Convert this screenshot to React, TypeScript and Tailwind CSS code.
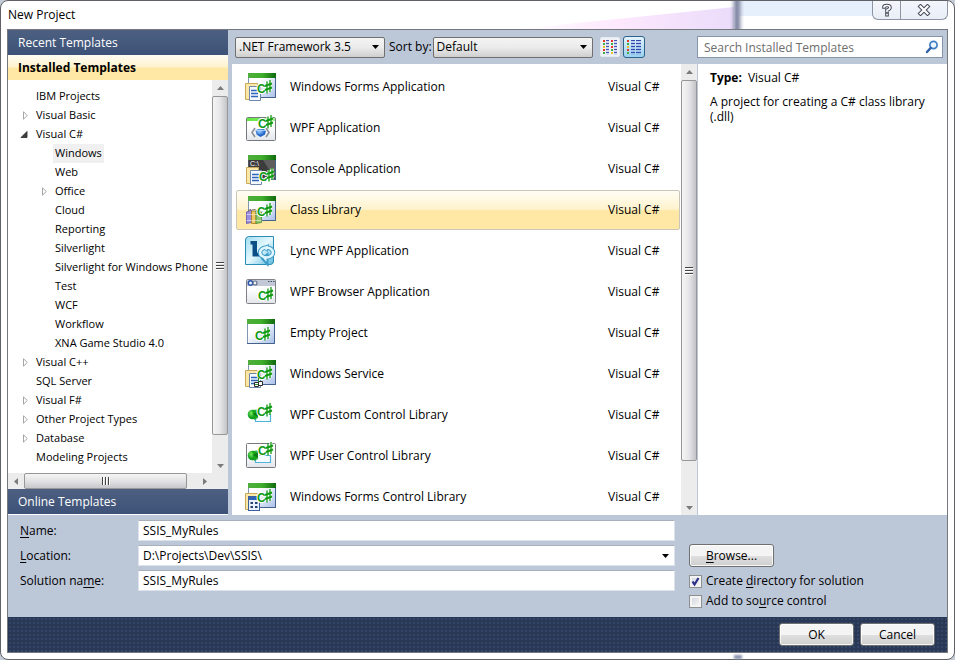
import { useState, type ReactNode } from "react";
import clsx from "clsx";

type IconKind =
  | "forms"
  | "wpf"
  | "console"
  | "library"
  | "lync"
  | "browser"
  | "empty"
  | "service"
  | "customControl"
  | "userControl"
  | "formsControl";

interface Template {
  name: string;
  language: string;
  icon: IconKind;
}

interface TreeNode {
  label: string;
  level: 0 | 1;
  state?: "open" | "closed";
}

const TEMPLATES: Template[] = [
  { name: "Windows Forms Application", language: "Visual C#", icon: "forms" },
  { name: "WPF Application", language: "Visual C#", icon: "wpf" },
  { name: "Console Application", language: "Visual C#", icon: "console" },
  { name: "Class Library", language: "Visual C#", icon: "library" },
  { name: "Lync WPF Application", language: "Visual C#", icon: "lync" },
  { name: "WPF Browser Application", language: "Visual C#", icon: "browser" },
  { name: "Empty Project", language: "Visual C#", icon: "empty" },
  { name: "Windows Service", language: "Visual C#", icon: "service" },
  { name: "WPF Custom Control Library", language: "Visual C#", icon: "customControl" },
  { name: "WPF User Control Library", language: "Visual C#", icon: "userControl" },
  { name: "Windows Forms Control Library", language: "Visual C#", icon: "formsControl" },
];

const TREE: TreeNode[] = [
  { label: "IBM Projects", level: 0 },
  { label: "Visual Basic", level: 0, state: "closed" },
  { label: "Visual C#", level: 0, state: "open" },
  { label: "Windows", level: 1 },
  { label: "Web", level: 1 },
  { label: "Office", level: 1, state: "closed" },
  { label: "Cloud", level: 1 },
  { label: "Reporting", level: 1 },
  { label: "Silverlight", level: 1 },
  { label: "Silverlight for Windows Phone", level: 1 },
  { label: "Test", level: 1 },
  { label: "WCF", level: 1 },
  { label: "Workflow", level: 1 },
  { label: "XNA Game Studio 4.0", level: 1 },
  { label: "Visual C++", level: 0, state: "closed" },
  { label: "SQL Server", level: 0 },
  { label: "Visual F#", level: 0, state: "closed" },
  { label: "Other Project Types", level: 0, state: "closed" },
  { label: "Database", level: 0, state: "closed" },
  { label: "Modeling Projects", level: 0 },
];

/* ---------- template icons, all on a 32x32 grid ---------- */

function CSharp({ x, y }: { x: number; y: number }) {
  return (
    <g>
      <text
        x={x}
        y={y}
        fill="#129a12"
        stroke="#fff"
        strokeWidth={2}
        strokeLinejoin="round"
        paintOrder="stroke"
        fontFamily="Liberation Sans, sans-serif"
        fontSize={12}
        fontWeight={700}
      >
        C
      </text>
      <g transform={`translate(${x + 8} ${y - 13})`} fill="none">
        <path d="M2 2V13M5 0.5V11.5M0 6L7 3.5M0 10L7 7.5" stroke="#fff" strokeWidth={3} />
        <path d="M2 1.5V13.5M5 0V12" stroke="#129a12" strokeWidth={1.3} />
        <path d="M0 6L7 3.5M0 10L7 7.5" stroke="#129a12" strokeWidth={2} />
      </g>
    </g>
  );
}

function GreenWindow({ x = 3, dark = false }: { x?: number; dark?: boolean }) {
  return (
    <g>
      <rect x={x + 0.5} y={2.5} width={27} height={24} fill={dark ? "#3c3c3c" : "url(#pane)"} stroke={dark ? "#555" : "#7f96b4"} />
      <path d={`M${x} 26.5H${x + 27.5}V3`} fill="none" stroke="#45628c" strokeWidth={1} />
      <rect x={x} y={2} width={28} height={5} fill="url(#greenBar)" />
    </g>
  );
}

function Sheets() {
  return (
    <g>
      <path d="M0.5 12.5H12.5V28.5H0.5Z" fill="#fbe8a6" stroke="#c9a95a" />
      <path d="M4.5 15.5H15.5V29.5H4.5Z" fill="#f4f8ff" stroke="#6f87ab" />
      <path d="M6 19.5H13M6 22.5H13M6 25.5H13" stroke="#2f63b8" strokeWidth={1.3} />
    </g>
  );
}

function GreenShapes() {
  return (
    <g>
      <path d="M14.5 15.5H25.5V22.5H10.5V19" fill="#f4fcff" stroke="#4fb4dc" strokeWidth={1.2} />
      <circle cx={7.5} cy={15.5} r={4.8} fill="url(#ball)" />
      <path d="M7 11L13 10.5L13 19L9 21Z" fill="#16a616" opacity={0.85} />
      <path d="M8 15L13 12V18Z" fill="#0d7c14" />
    </g>
  );
}

function IconDefs() {
  return (
    <svg width="0" height="0" className="absolute" aria-hidden="true">
      <defs>
        <linearGradient id="greenBar">
          <stop offset="0" stopColor="#4fae3c" />
          <stop offset="0.5" stopColor="#3fae2c" />
          <stop offset="1" stopColor="#0f6a0c" />
        </linearGradient>
        <linearGradient id="limeBar">
          <stop offset="0" stopColor="#5ee63c" />
          <stop offset="1" stopColor="#a4f58c" />
        </linearGradient>
        <linearGradient id="pane" x2="1" y2="1">
          <stop offset="0.35" stopColor="#ffffff" />
          <stop offset="1" stopColor="#a9c0ea" />
        </linearGradient>
        <linearGradient id="greyPane" x2="0" y2="1">
          <stop offset="0.4" stopColor="#ffffff" />
          <stop offset="1" stopColor="#e2e5ea" />
        </linearGradient>
        <linearGradient id="lync" x2="1" y2="1">
          <stop offset="0" stopColor="#9fdcf0" />
          <stop offset="0.5" stopColor="#e4f8fe" />
          <stop offset="1" stopColor="#5bb9dc" />
        </linearGradient>
        <radialGradient id="ball" cx="0.4" cy="0.35">
          <stop offset="0" stopColor="#7bea5c" />
          <stop offset="1" stopColor="#0c9a20" />
        </radialGradient>
        <radialGradient id="gem" cx="0.4" cy="0.3">
          <stop offset="0" stopColor="#9cd0ff" />
          <stop offset="1" stopColor="#1f62c8" />
        </radialGradient>
      </defs>
    </svg>
  );
}

const ICON_ART: Record<IconKind, ReactNode> = {
  forms: (
    <>
      <GreenWindow />
      <Sheets />
      <CSharp x={12} y={22} />
    </>
  ),
  wpf: (
    <>
      <rect x={1.5} y={5.5} width={29} height={23} rx={1} fill="url(#greyPane)" stroke="#76797d" />
      <rect x={2} y={6} width={28} height={3} fill="url(#limeBar)" />
      <path d="M10 16L7 20.5L10 25M21 16L24 20.5L21 25" fill="none" stroke="#8c9096" strokeWidth={1.6} />
      <path d="M10.5 18.5L13 17H18.5L21 18.5L20 22.5L15.5 25L11.5 22.5Z" fill="url(#gem)" />
      <path d="M10.5 18.5H21" stroke="#b9dcff" strokeWidth={0.8} />
      <CSharp x={13} y={16} />
    </>
  ),
  console: (
    <>
      <GreenWindow dark />
      <path d="M18 7H30V26Z" fill="#808080" opacity={0.5} />
      <text x={5} y={13} fill="#fff" fontSize={7} fontFamily="Liberation Sans, sans-serif">
        C:\
      </text>
      <g transform="translate(1 2)">
        <Sheets />
      </g>
      <CSharp x={14} y={28} />
    </>
  ),
  library: (
    <>
      <GreenWindow />
      <path d="M1.5 18L6.5 16V28.5L1.5 29.5Z" fill="#9d8fe0" stroke="#5e51ac" strokeWidth={0.8} />
      <path d="M6.5 17H11V29.5H6.5Z" fill="#f2c765" stroke="#a87b20" strokeWidth={0.8} />
      <path d="M11 16.5L16.5 18V28.5L11 29.5Z" fill="#8fc86c" stroke="#4a8a30" strokeWidth={0.8} />
      <path d="M1.5 20.5H16.5M1.5 26.5H16.5" stroke="#fff" strokeWidth={0.7} opacity={0.7} />
      <path d="M3 16.5L6 15.5M7 16L10.5 15.5M12 16L15 17" stroke="#7a6a50" strokeWidth={1} />
      <CSharp x={12} y={22} />
    </>
  ),
  lync: (
    <>
      <path d="M3.5 1.5H28.5V27Q28 29.5 25 29.5H0.5V5Q0.5 2 3.5 1.5Z" fill="url(#lync)" stroke="#2b8db4" />
      <path d="M5.5 6H12V17.5H16V21.5H7.5V9.500H5.500Z" fill="#0c4f86" />
      <ellipse cx={21.5} cy={17.5} rx={6.500} ry={5} fill="none" stroke="#3c9cc8" strokeWidth={4.600} />
      <path d="M17 23.500L22.500 19V29.500Z" fill="#e0f6ff" stroke="#3c9cc8" strokeWidth={2} />
      <path d="M23.500 9.500L17.500 13L22.500 16.500Z" fill="#e0f6ff" stroke="#3c9cc8" strokeWidth={1} />
      <ellipse cx={21.5} cy={17.5} rx={6.500} ry={5} fill="none" stroke="#e0f6ff" strokeWidth={2.600} />
    </>
  ),
  browser: (
    <>
      <rect x={1.5} y={3.5} width={29} height={24} rx={1} fill="url(#greyPane)" stroke="#808287" />
      <rect x={2} y={4} width={28} height={6} fill="#c3c8d6" />
      <circle cx={5.5} cy={7} r={2.2} fill="#e6eeff" stroke="#2b55a8" strokeWidth={1.4} />
      <circle cx={10} cy={7} r={2} fill="#eef0f4" stroke="#63708c" strokeWidth={1.2} />
      <path d="M23 5.5H24.5M25.5 5.5H27M28 5.5H29.5" stroke="#4c5264" strokeWidth={1} />
      <CSharp x={13} y={24} />
    </>
  ),
  empty: (
    <>
      <GreenWindow x={2} />
      <CSharp x={10} y={23} />
    </>
  ),
  service: (
    <>
      <GreenWindow />
      <Sheets />
      <CSharp x={12} y={21} />
      <path d="M9.5 24.5H13.5V28.5H9.5ZM13.5 23.5H17.5V27.5H13.5Z" fill="#fff" stroke="#2d2d2d" strokeWidth={1} />
      <path d="M10 26.5H13M13.5 20V24" stroke="#28962a" strokeWidth={1} />
    </>
  ),
  customControl: (
    <>
      <GreenShapes />
      <CSharp x={12} y={17} />
    </>
  ),
  userControl: (
    <>
      <rect x={1.5} y={3.5} width={29} height={24} rx={1} fill="url(#greyPane)" stroke="#76797d" />
      <GreenShapes />
      <CSharp x={13} y={15} />
    </>
  ),
  formsControl: (
    <>
      <GreenWindow />
      <path d="M0.5 12.5H12.5V28.5H0.5Z" fill="#fbe8a6" stroke="#c9a95a" />
      <rect x={3.5} y={15.5} width={11} height={14} fill="#e9f1ff" stroke="#3b5f9c" />
      <rect x={4} y={16} width={10} height={3} fill="#2f63b8" />
      <path d="M5.5 22H8M10 22H12.5M5.5 26H8M10 26H12.5" stroke="#24406e" strokeWidth={2} />
      <CSharp x={12} y={21} />
    </>
  ),
};

function TemplateIcon({ kind }: { kind: IconKind }) {
  return (
    <svg width="32" height="32" viewBox="0 0 32 32" className="shrink-0" aria-hidden="true">
      {ICON_ART[kind]}
    </svg>
  );
}

/* ---------- small shared parts ---------- */

function Arrow({ dir }: { dir: "up" | "down" | "left" | "right" }) {
  const d = {
    up: "M0 5L3.5 1L7 5Z",
    down: "M0 2H7L3.5 6Z",
    left: "M5 0V7L1 3.5Z",
    right: "M2 0V7L6 3.5Z",
  }[dir];
  return (
    <svg width="7" height="7" viewBox="0 0 7 7" className="shrink-0" aria-hidden="true">
      <path d={d} fill="#7b7b7b" />
    </svg>
  );
}

function VScroll({ thumb }: { thumb: string }) {
  return (
    <div className="flex w-4 shrink-0 flex-col items-center bg-[#ececec]">
      <div className="flex h-4 items-center">
        <Arrow dir="up" />
      </div>
      <div className="flex w-full grow flex-col">
        <div
          className={clsx(
            "flex flex-col items-center justify-center gap-px rounded-xs border border-[#979797] bg-linear-to-r from-[#f5f5f5] via-[#e6e6e8] to-[#c4c4c8]",
            thumb,
          )}
        >
          <span className="h-0.5 w-2 border-b border-white bg-[#444]" />
          <span className="h-0.5 w-2 border-b border-white bg-[#444]" />
          <span className="h-0.5 w-2 border-b border-white bg-[#444]" />
        </div>
      </div>
      <div className="flex h-4 items-center">
        <Arrow dir="down" />
      </div>
    </div>
  );
}

function HScroll() {
  return (
    <div className="flex h-4 shrink-0 items-center bg-[#ececec] pr-4">
      <div className="flex w-4 justify-center">
        <Arrow dir="left" />
      </div>
      <div className="flex h-full grow">
        <div className="flex h-full w-[95%] items-center justify-center gap-px rounded-xs border border-[#979797] bg-linear-to-b from-[#f5f5f5] via-[#e2e2e4] to-[#c8c8cc]">
          <span className="h-2 w-0.5 border-r border-white bg-[#444]" />
          <span className="h-2 w-0.5 border-r border-white bg-[#444]" />
          <span className="h-2 w-0.5 border-r border-white bg-[#444]" />
        </div>
      </div>
      <div className="flex w-4 justify-center">
        <Arrow dir="right" />
      </div>
    </div>
  );
}

function Caret() {
  return (
    <svg
      width="7"
      height="4"
      viewBox="0 0 7 4"
      className="pointer-events-none absolute top-1/2 right-1.5 -translate-y-1/2"
      aria-hidden="true"
    >
      <path d="M0 0H7L3.5 4Z" fill="#000" />
    </svg>
  );
}

function ToolbarSelect({ id, label, value, width }: { id: string; label?: string; value: string; width: string }) {
  return (
    <div className={clsx("relative", width)}>
      <select
        id={id}
        aria-label={label}
        className="block h-[21px] w-full appearance-none rounded-xs border border-[#707070] bg-linear-to-b from-[#f4f4f4] via-[#ebebeb] to-[#cfcfcf] pl-[3px]"
      >
        <option>{value}</option>
      </select>
      <Caret />
    </div>
  );
}

function PushButton({ children, className }: { children: ReactNode; className?: string }) {
  return (
    <button
      type="button"
      className={clsx(
        "rounded-[3px] border border-[#707070] bg-linear-to-b from-[#f4f4f4] from-50% via-[#dedede] via-55% to-[#cfcfcf] inset-ring inset-ring-white/80",
        className,
      )}
    >
      {children}
    </button>
  );
}

function CheckRow({ id, defaultChecked, children }: { id: string; defaultChecked?: boolean; children: ReactNode }) {
  return (
    <div className="flex h-5 items-center">
      <span className="relative flex">
        <input
          id={id}
          type="checkbox"
          defaultChecked={defaultChecked}
          className="peer size-[13px] appearance-none border border-[#8e8f8f] bg-linear-to-br from-[#cfd3da] to-[#f8f8f8] inset-ring-2 inset-ring-[#f4f4f4]"
        />
        <svg
          viewBox="0 0 13 13"
          className="pointer-events-none absolute inset-0 hidden size-[13px] peer-checked:block"
          aria-hidden="true"
        >
          <path d="M3.5 6.5L5.5 9.5L9.5 3" fill="none" stroke="#2b2f86" strokeWidth="2.2" />
        </svg>
      </span>
      <label htmlFor={id} className="ml-1">
        {children}
      </label>
    </div>
  );
}

/* ---------- dialog sections ---------- */

function TitleBar() {
  return (
    <header className="relative flex h-7 shrink-0 items-center pl-px">
      {/* blurred desktop showing through the glass */}
      <svg width="600" height="28" viewBox="0 0 600 28" className="absolute top-0 right-0" aria-hidden="true">
        <defs>
          <linearGradient id="glow">
            <stop offset="0" stopColor="#fff" />
            <stop offset="0.45" stopColor="#fde8fd" />
            <stop offset="1" stopColor="#ebdcfb" />
          </linearGradient>
          <filter id="soft" x="-1" width="3">
            <feGaussianBlur stdDeviation="2 1" />
          </filter>
        </defs>
        <path d="M170 28Q270 18 386 6V28Z" fill="url(#glow)" />
        <rect x="391" y="0" width="209" height="15" fill="#e6effc" />
        <rect x="386" y="-4" width="6" height="36" fill="#6f7796" filter="url(#soft)" />
      </svg>
      <h1 className="relative">New Project</h1>
      <div className="absolute top-0 right-0 flex h-[19px] w-[76px] rounded-b-md border border-t-0 border-[#8d95a3] bg-linear-to-b from-[#f3f6fb] to-[#e9eef6]">
        <button type="button" aria-label="Help" className="flex w-7 items-center justify-center border-r border-[#8d95a3]">
          <svg width="12" height="14" viewBox="0 0 12 14" aria-hidden="true">
            <g fill="none" strokeLinecap="square">
              <path d="M3 4Q3 2.5 6 2.5Q9 2.5 9 4.5Q9 6 6 7.2V8.5M6 11.5V11.6" stroke="#454a58" strokeWidth="3.6" />
              <path d="M3 4Q3 2.5 6 2.5Q9 2.5 9 4.5Q9 6 6 7.2V8.5M6 11.5V11.6" stroke="#fff" strokeWidth="1.6" />
            </g>
          </svg>
        </button>
        <button type="button" aria-label="Close" className="flex grow items-center justify-center">
          <svg width="14" height="12" viewBox="0 0 14 12" aria-hidden="true">
            <path d="M3.5 2.5L10.5 9.5M10.5 2.5L3.5 9.5" stroke="#454a58" strokeWidth="4.2" strokeLinecap="square" />
            <path d="M3.5 2.5L10.5 9.5M10.5 2.5L3.5 9.5" stroke="#fff" strokeWidth="2.2" strokeLinecap="square" />
          </svg>
        </button>
      </div>
    </header>
  );
}

function TreeRow({ node, selected, onSelect }: { node: TreeNode; selected: boolean; onSelect: () => void }) {
  return (
    <li className={clsx("flex h-[19px] items-center", node.level === 0 ? "pl-3" : "pl-[31px]")}>
      <span className="flex w-[14px] shrink-0 justify-start">
        {node.state === "closed" && (
          <svg width="9" height="9" viewBox="0 0 9 9" aria-hidden="true">
            <path d="M3.5 0.8V8.2L7.3 4.5Z" fill="#fff" stroke="#a6a6a6" />
          </svg>
        )}
        {node.state === "open" && (
          <svg width="9" height="9" viewBox="0 0 9 9" aria-hidden="true">
            <path d="M7 1.5V7.5H1Z" fill="#404040" stroke="#262626" strokeWidth="0.8" />
          </svg>
        )}
      </span>
      <button
        type="button"
        onClick={onSelect}
        className={clsx("h-full pl-0.5 whitespace-nowrap", selected && "bg-[#f0f0f0] pr-0.5")}
      >
        {node.label}
      </button>
    </li>
  );
}

function TemplateTree() {
  const [selected, setSelected] = useState("Windows");
  return (
    <nav className="flex w-[220px] shrink-0 flex-col border-b border-white bg-white" aria-label="Templates">
      <button type="button" className="h-[25px] shrink-0 bg-linear-to-b from-[#4d6082] to-[#3d5277] pl-2.5 text-left text-white">
        Recent Templates
      </button>
      <button
        type="button"
        className="h-[25px] shrink-0 bg-linear-to-b from-[#fffcf4] from-0% via-[#fff3cd] via-48% to-[#ffe8a6] to-52% pl-2.5 text-left font-bold"
      >
        Installed Templates
      </button>
      <div className="flex min-h-0 grow">
        <ul className="min-w-0 grow overflow-hidden pt-[7px] text-[11px]">
          {TREE.map((node) => (
            <TreeRow
              key={node.label}
              node={node}
              selected={selected === node.label}
              onSelect={() => setSelected(node.label)}
            />
          ))}
        </ul>
        <VScroll thumb="h-[94%]" />
      </div>
      <HScroll />
      <button type="button" className="h-[25px] shrink-0 bg-linear-to-b from-[#4d6082] to-[#3d5277] pl-2.5 text-left text-white">
        Online Templates
      </button>
    </nav>
  );
}

function ViewIcon({ columns }: { columns: 1 | 2 }) {
  const rows = [1, 4, 7, 10, 13];
  const colours = ["#e0362c", "#3fae49", "#e8c22a", "#e0362c", "#3fae49"];
  return (
    <svg width="16" height="16" viewBox="0 0 16 16" aria-hidden="true">
      {rows.map((y, i) => (
        <g key={y}>
          <rect x={1} y={y} width={2} height={2} fill={colours[i]} />
          {columns === 2 ? (
            <>
              <path d={`M4 ${y + 0.5}H7M12 ${y + 0.5}H15`} stroke="#4257b8" strokeWidth={1} />
              <path d={`M4 ${y + 2}H7M12 ${y + 2}H15`} stroke="#8b98d8" strokeWidth={0.6} />
              <rect x={9} y={y} width={2} height={2} fill={colours[(i + 3) % 5]} />
            </>
          ) : (
            <>
              <path d={`M5 ${y + 0.5}H9M10 ${y + 0.5}H15`} stroke="#3048b0" strokeWidth={1} />
              <path d={`M5 ${y + 2}H9M10 ${y + 2}H15`} stroke="#7f8fd0" strokeWidth={0.6} />
            </>
          )}
        </g>
      ))}
    </svg>
  );
}

function Toolbar() {
  return (
    <div className="flex h-[34px] shrink-0 items-center pr-1">
      <div className="flex grow items-center pl-[3px]">
        <ToolbarSelect id="framework" label="Framework" value=".NET Framework 3.5" width="w-[150px]" />
        <label htmlFor="sort" className="mr-px ml-1 whitespace-nowrap">
          Sort by:
        </label>
        <ToolbarSelect id="sort" value="Default" width="w-40" />
        <button
          type="button"
          aria-label="Small icons"
          className="ml-[7px] flex size-5 items-center justify-center rounded-xs border border-[#e4eaf2] bg-[#eef1f6]"
        >
          <ViewIcon columns={2} />
        </button>
        <button
          type="button"
          aria-label="Medium icons"
          className="ml-[3px] flex size-[22px] items-center justify-center rounded-[3px] border border-[#2c628b] bg-linear-to-b from-[#e5f4fc] to-[#98d1ef]"
        >
          <ViewIcon columns={1} />
        </button>
      </div>
      <div className="relative w-[246px]">
        <input
          type="search"
          aria-label="Search Installed Templates"
          placeholder="Search Installed Templates"
          className="block h-[22px] w-full border border-[#8595ac] bg-white pr-6 pl-1.5 placeholder:text-[#6d6d6d]"
        />
        <svg width="14" height="14" viewBox="0 0 14 14" className="absolute top-1 right-1" aria-hidden="true">
          <circle cx="8.5" cy="5" r="3.6" fill="#eef6ff" stroke="#3f7fc4" strokeWidth="1.7" />
          <path d="M5.8 7.8L2 12" stroke="#2c5fa8" strokeWidth="2.4" strokeLinecap="round" />
        </svg>
      </div>
    </div>
  );
}

function TemplateList() {
  const [selected, setSelected] = useState("Class Library");
  return (
    <div className="flex min-w-0 grow bg-white">
      <ul className="flex min-w-0 grow flex-col gap-px overflow-hidden pt-[3px] pr-px pl-1">
        {TEMPLATES.map((t) => (
          <li key={t.name} className="shrink-0">
            <button
              type="button"
              onClick={() => setSelected(t.name)}
              className={clsx(
                "flex h-10 w-full items-center rounded-xs border pl-2 text-left",
                selected === t.name
                  ? "border-[#c9c7ba] bg-linear-to-b from-[#fffcf4] from-0% via-[#fff3cd] via-48% to-[#ffe8a6] to-52%"
                  : "border-transparent",
              )}
            >
              <TemplateIcon kind={t.icon} />
              <span className="ml-[13px] grow truncate">{t.name}</span>
              <span className="w-[71px] shrink-0">{t.language}</span>
            </button>
          </li>
        ))}
      </ul>
      <VScroll thumb="h-[91%]" />
    </div>
  );
}

function Details() {
  return (
    <aside className="w-[250px] shrink-0 border-l border-[#bcc7d8] bg-white px-3 pt-1.5">
      <p className="leading-4">
        <strong className="mr-1.5">Type:</strong>Visual C#
      </p>
      <p className="mt-2 leading-[15px]">A project for creating a C# class library (.dll)</p>
    </aside>
  );
}

function ProjectForm() {
  const field = "h-[21px] w-full border border-t-[#a9b0bb] border-[#dde3ec] bg-white pl-1";
  return (
    <div className="flex shrink-0 pt-[5px] pb-1.5 pl-3">
      <div className="flex grow flex-col gap-1">
        <div className="flex items-center">
          <label htmlFor="name" className="w-[118px] shrink-0">
            <u className="underline-offset-2">N</u>ame:
          </label>
          <input id="name" defaultValue="SSIS_MyRules" className={field} />
        </div>
        <div className="flex items-center">
          <label htmlFor="location" className="w-[118px] shrink-0">
            <u className="underline-offset-2">L</u>ocation:
          </label>
          <div className="relative w-full">
            <select id="location" className={clsx(field, "block appearance-none")}>
              <option>D:\Projects\Dev\SSIS\</option>
            </select>
            <Caret />
          </div>
        </div>
        <div className="flex items-center">
          <label htmlFor="solution" className="w-[118px] shrink-0">
            Solution na<u className="underline-offset-2">m</u>e:
          </label>
          <input id="solution" defaultValue="SSIS_MyRules" className={field} />
        </div>
      </div>
      <div className="ml-3.5 w-[258px] shrink-0 pt-6">
        <PushButton className="mb-1 block h-[23px] w-[85px]">
          <u className="underline-offset-2">B</u>rowse...
        </PushButton>
        <CheckRow id="mkdir" defaultChecked>
          Create <u className="underline-offset-2">d</u>irectory for solution
        </CheckRow>
        <CheckRow id="scc">
          Add to so<u className="underline-offset-2">u</u>rce control
        </CheckRow>
      </div>
    </div>
  );
}

export default function App() {
  return (
    <div className="h-screen bg-[#c4ccd8] font-['Open_Sans','Noto_Sans',sans-serif] text-xs text-black">
      <IconDefs />
      <main className="relative flex h-full flex-col rounded-lg border border-[#5f6166] bg-white px-1.5 pb-1.5">
        <TitleBar />
        <div className="flex min-h-0 grow flex-col border border-[#75787d] bg-[#bcc7d8]">
          <div className="flex min-h-0 grow">
            <TemplateTree />
            <div className="ml-1 flex min-w-0 grow flex-col">
              <Toolbar />
              <div className="flex min-h-0 grow">
                <TemplateList />
                <Details />
              </div>
            </div>
          </div>
          <ProjectForm />
          <footer className="flex shrink-0 justify-end gap-1.5 bg-[#293955] bg-[radial-gradient(#33466a_1px,transparent_1px)] bg-size-[4px_4px] px-3 py-1.5">
            <PushButton className="h-[23px] w-[75px]">OK</PushButton>
            <PushButton className="h-[23px] w-[75px]">Cancel</PushButton>
          </footer>
        </div>
        {/* lower end of the blurred edge behind the frame */}
        <span className="absolute right-[212px] bottom-0 h-1 w-2 bg-[#8a93ad] blur-[1px]" />
      </main>
    </div>
  );
}
